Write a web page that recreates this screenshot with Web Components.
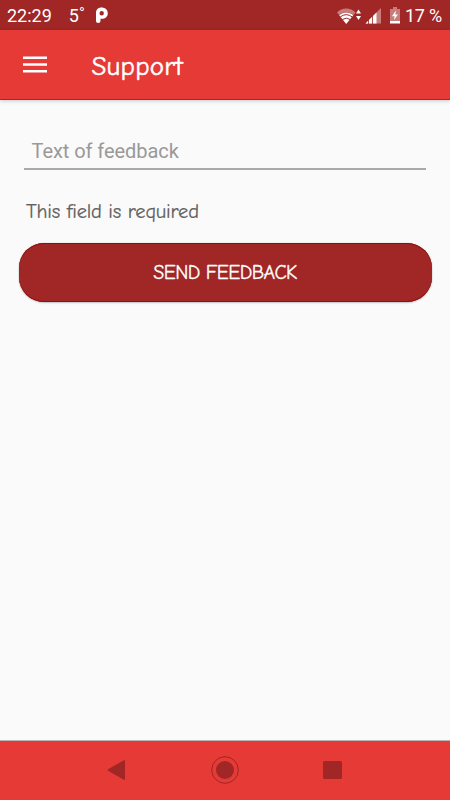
<!DOCTYPE html>
<html lang="en">
<head>
<meta charset="utf-8">
<title>Support</title>
<style>
	html, body {
		margin: 0;
		height: 100%;
	}
	body {
		--primary: #e53a36;
		--primary-dark: #a02725;
		--surface: #fafafa;
		--hand: "Comic Neue", "Comic Sans MS", Lato, sans-serif;
		background: var(--surface);
		font-family: Roboto, sans-serif;
		overflow: hidden;
	}
</style>
</head>
<body>
<support-screen></support-screen>

<script>
/** Attaches an open shadow root and fills it with the class's markup. */
class BaseElement extends HTMLElement {
	constructor() {
		super();
		this.attachShadow({ mode: "open" }).innerHTML = this.constructor.markup;
	}
}

class StatusBar extends BaseElement {
	static markup = `
		<style>
			:host {
				display: flex;
				align-items: center;
				box-sizing: border-box;
				height: 30px;
				padding: 2px 8px 0 7px;
				background: var(--primary-dark);
				color: #fff;
				font-size: 18px;
				line-height: 28px;
				white-space: nowrap;
			}
			.temp { margin-left: 17px; }
			.app { margin-left: 10px; }
			.wifi { margin-left: auto; }
			.signal { margin-left: 4px; }
			.battery { margin-left: 9px; }
			.level { margin-left: 5px; letter-spacing: -.2px; }
			svg { display: block; margin-top: -1px; fill: #fff; }
		</style>
		<span>22:29</span>
		<span class="temp">5˚</span>
		<svg class="app" width="13" height="17" viewBox="0 0 13 17">
			<path fill-rule="evenodd" d="M1 6C1 2.600 3.100 .5 6.500 .5S12.800 2.600 12.800 6.200 10 11.800 7 11.800H5.500V14Q5.500 16 3.200 16T1 14ZM6.700 4.100A2.200 2.200 0 1 0 6.700 8.500 2.200 2.200 0 0 0 6.700 4.100Z"/>
		</svg>
		<svg class="wifi" width="25" height="18" viewBox="0 0 25 18">
			<path opacity=".4" d="M1 5.500C6 .3 14.500.3 19.500 5.500L17.500 8C13.500 4.200 7 4.200 3 8Z"/>
			<path d="M3.200 8.300C7.300 4.700 13.200 4.700 17.300 8.300L10.250 17Z"/>
			<path d="M4.300 9.900Q10.250 5.400 16.200 9.900M6.400 12.500Q10.250 9.800 14.100 12.500" fill="none" stroke="#a02725"/>
			<path d="M22.500 2.500L25 6.500H20ZM22.500 13L25 9H20Z"/>
		</svg>
		<svg class="signal" width="16" height="16" viewBox="0 0 16 16">
			<path opacity=".4" d="M.5 15.500L16 0V15.500Z"/>
			<path d="M.5 15.500L11.500 4.500V15.500Z"/>
			<path d="M3.500 10V16M7.500 7V16" stroke="#a02725" stroke-width=".8"/>
		</svg>
		<svg class="battery" width="10" height="17" viewBox="0 0 10 17">
			<path opacity=".4" d="M3 0H7V2H10V14H0V2H3Z"/>
			<path d="M0 14H10V16.500H0ZM5.800 3.500L2 9.300H4.600L4 13 8 7.500H5.400Z"/>
		</svg>
		<span class="level">17 %</span>
	`;
}

class AppBar extends BaseElement {
	static markup = `
		<style>
			:host {
				display: flex;
				align-items: center;
				box-sizing: border-box;
				height: 70px;
				padding-left: 23px;
				background: var(--primary);
				border-bottom: 1px solid #cf1512;
				box-shadow: 0 1px 4px rgba(0, 0, 0, .2);
				color: #fff;
			}
			svg { display: block; fill: #fff; }
			h1 {
				margin: 4px 0 0 44.500px;
				font: 400 27px/32px var(--hand);
				letter-spacing: .2px;
				-webkit-text-stroke: .5px;
			}
		</style>
		<svg width="24" height="18" viewBox="0 0 24 18">
			<path d="M0 .5H24V3H0ZM0 7.200H24V9.700H0ZM0 14H24V16.500H0Z"/>
		</svg>
		<h1><slot></slot></h1>
	`;
}

class FeedbackField extends BaseElement {
	static markup = `
		<style>
			:host {
				display: block;
				margin: 0 5.500px;
			}
			.input {
				padding: 1px 0 2px 7.500px;
				border-bottom: 2px solid #a9a9a9;
				color: #999;
				font-size: 20px;
				line-height: 29px;
				letter-spacing: -.06px;
			}
			.hint {
				padding: 28px 0 0 2px;
				color: #606060;
				font: 400 20.500px/28px var(--hand);
				letter-spacing: -.2px;
				-webkit-text-stroke: .2px;
			}
		</style>
		<div class="input"><slot></slot></div>
		<div class="hint"><slot name="hint"></slot></div>
	`;
}

class PillButton extends BaseElement {
	static markup = `
		<style>
			:host { display: block; }
			button {
				display: block;
				width: 100%;
				height: 59px;
				padding: 1px 0 0;
				border: 0;
				border-radius: 25px;
				background: var(--primary-dark);
				box-shadow: inset 0 1px #930c0f, inset 0 -1px #930c0f, 0 0 1px rgba(0, 0, 0, .4), 0 1px 2px rgba(0, 0, 0, .2);
				color: #fff;
				font: 400 20px/24px var(--hand);
				letter-spacing: -.6px;
				-webkit-text-stroke: .3px;
			}
		</style>
		<button type="button"><slot></slot></button>
	`;
}

class NavBar extends BaseElement {
	static markup = `
		<style>
			:host {
				display: flex;
				justify-content: center;
				align-items: center;
				box-sizing: border-box;
				height: 60px;
				padding-bottom: 2px;
				border-top: 1px solid #bdb5b4;
				background: var(--primary);
			}
			svg { display: block; margin: 0 39.500px; }
			path, rect, .dot { fill: var(--primary-dark); }
			.ring { fill: none; stroke: var(--primary-dark); }
		</style>
		<svg width="28" height="28" viewBox="0 0 28 28">
			<path d="M19.500 4.500Q21 3.600 21 5V23Q21 24.400 19.500 23.500L4 14.700Q3 14 4 13.300Z"/>
		</svg>
		<svg width="28" height="28" viewBox="0 0 28 28">
			<circle class="ring" cx="14" cy="14" r="13.300"/>
			<circle class="dot" cx="14" cy="14" r="9"/>
		</svg>
		<svg width="28" height="28" viewBox="0 0 28 28">
			<rect x="5" y="5" width="19" height="18" rx="1.500"/>
		</svg>
	`;
}

class SupportScreen extends BaseElement {
	static markup = `
		<style>
			:host {
				display: flex;
				flex-direction: column;
				height: 100vh;
			}
			main {
				flex: 1;
				padding: 36px 18.500px 0;
			}
			pill-button { margin-top: 17px; }
		</style>
		<status-bar></status-bar>
		<app-bar>Support</app-bar>
		<main>
			<feedback-field>
				Text of feedback
				<span slot="hint">This field is required</span>
			</feedback-field>
			<pill-button>SEND FEEDBACK</pill-button>
		</main>
		<nav-bar></nav-bar>
	`;
}

customElements.define("status-bar", StatusBar);
customElements.define("app-bar", AppBar);
customElements.define("feedback-field", FeedbackField);
customElements.define("pill-button", PillButton);
customElements.define("nav-bar", NavBar);
customElements.define("support-screen", SupportScreen);
</script>
</body>
</html>
